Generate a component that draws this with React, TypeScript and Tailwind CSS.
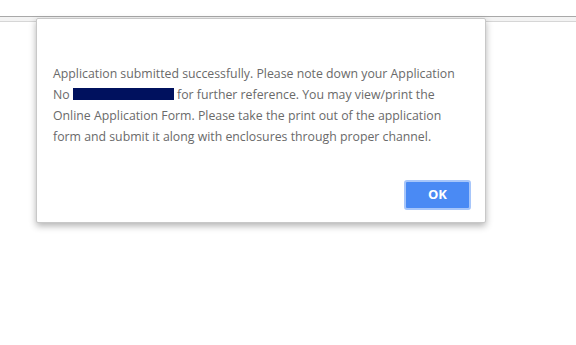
export default function App() {
  return (
    <div className="relative w-[576px] h-[345px] bg-white overflow-hidden font-['Open_Sans','Noto_Sans',sans-serif]">
      {/* top bar behind the dialog */}
      <div className="pt-4">
        <div className="h-[6px] border-t border-t-[#a9a9a9] border-b border-b-[#d6d6d6] bg-[#f3f3f3]" />
      </div>

      {/* dialog */}
      <div className="absolute left-9 top-[18px] w-[450px] h-[205px] bg-white border border-[#c8c8c8] rounded-[2px] shadow-[0_3px_7px_rgba(0,0,0,0.3)] flex flex-col">
        <div className="pl-4 pr-[15px] pt-[44px] text-[12.3px] leading-[21px] text-[#6a6a6a]">
          Application submitted successfully. Please note down your Application No{" "}
          <span className="inline-block w-[101px] h-[12px] bg-[#00115e] align-[-1px]" /> for further
          reference. You may view/print the Online Application Form. Please take the print out of the
          application form and submit it along with enclosures through proper channel.
        </div>
        <div className="mt-auto flex justify-end pr-[14px] pb-[12px]">
          <button className="w-[67px] h-[30px] rounded-[3px] bg-[#4a8af4] border-2 border-[#a7c6fa] text-white text-[13px] font-bold">
            OK
          </button>
        </div>
      </div>
    </div>
  );
}
